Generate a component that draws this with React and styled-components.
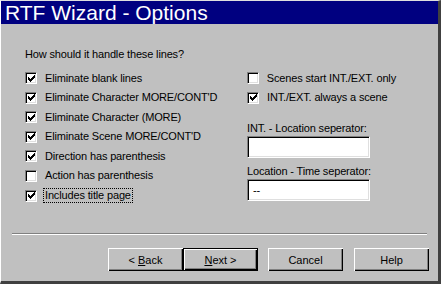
import React from 'react';
import styled, { createGlobalStyle } from 'styled-components';

const Global = createGlobalStyle`
    html, body {
        margin: 0;
        padding: 0;
        background: #c0c0c0;
    }
`
const Janela = styled.div`
    width: 441px;
    height: 284px;
    box-sizing: border-box;
    background: #c0c0c0;
    border-top: 1px solid #dfdfdf;
    border-left: 1px solid #ffffff;
    border-right: 3px solid #404040;
    border-bottom: 3px solid #404040;
    display: flex;
    flex-direction: column;
    font-family: "Liberation Sans", Arial, sans-serif;
    font-size: 11px;
    letter-spacing: -0.15px;
    color: #000000;
`
const BarraTitulo = styled.div`
    height: 23px;
    background: #000080;
    color: #ffffff;
    font-size: 21px;
    letter-spacing: 0;
    line-height: 23px;
    padding-left: 4px;
    white-space: nowrap;
`
const Corpo = styled.div`
    display: flex;
    flex-direction: row;
    padding: 24px 0 1px 24px;
    flex: 1;
`
const Coluna = styled.div`
    display: flex;
    flex-direction: column;
    width: ${props => props.largura}px;
`
const Pergunta = styled.div`
    line-height: 13px;
    margin-bottom: 11px;
`
const Lista = styled.div`
    display: flex;
    flex-direction: column;
    gap: 7.6px;
    margin-top: ${props => props.topo || 0}px;
`
const Linha = styled.label`
    display: flex;
    align-items: center;
    height: 12px;
    gap: 7px;
    white-space: nowrap;
`
const Caixa = styled.span`
    width: 12px;
    height: 12px;
    box-sizing: border-box;
    background: #ffffff;
    border-top: 1px solid #808080;
    border-left: 1px solid #808080;
    border-right: 1px solid #ffffff;
    border-bottom: 1px solid #ffffff;
    box-shadow: inset 1px 1px 0 #000000, inset -1px -1px 0 #dfdfdf;
    display: flex;
    align-items: center;
    justify-content: center;
`
const Texto = styled.span`
    line-height: 13px;
    padding: 0 1px;
    outline: ${props => props.foco ? '1px dotted #000000' : 'none'};
`
const Rotulo = styled.div`
    line-height: 13px;
    margin-top: ${props => props.topo}px;
    margin-bottom: 1px;
`
const Campo = styled.div`
    width: 123px;
    height: 22px;
    box-sizing: border-box;
    background: #ffffff;
    border-top: 1px solid #808080;
    border-left: 1px solid #808080;
    border-right: 1px solid #ffffff;
    border-bottom: 1px solid #ffffff;
    box-shadow: inset 1px 1px 0 #000000, inset -1px -1px 0 #dfdfdf;
    padding: 4px 0 0 5px;
    line-height: 13px;
`
const Separador = styled.div`
    margin: 0 11px 0 11px;
    height: 0;
    border-top: 1px solid #808080;
    border-bottom: 1px solid #ffffff;
`
const Botoes = styled.div`
    display: flex;
    justify-content: flex-end;
    padding: 13px 9px 10px 0;
`
const Grupo = styled.div`
    display: flex;
    margin-left: ${props => props.espaco || 0}px;
`
const Botao = styled.button`
    width: ${props => props.largura || 75}px;
    height: 23px;
    box-sizing: border-box;
    background: #c0c0c0;
    font-family: "Liberation Sans", Arial, sans-serif;
    font-size: 11px;
    color: #000000;
    padding: 0;
    border: ${props => props.padrao ? '1px solid #000000' : 'none'};
    box-shadow: inset 1px 1px 0 #ffffff, inset -1px -1px 0 #000000, inset -2px -2px 0 #808080;
    u {
        text-decoration: underline;
    }
`

const Visto = () => (
    <svg width="7" height="7" viewBox="0 0 7 7" shapeRendering="crispEdges">
        <path d="M0 2 L0 5 L2 7 L7 2 L7 0 L2 4 Z" fill="#000000" />
    </svg>
)

const Opcao = ({ marcado, foco, children }) => (
    <Linha>
        <Caixa>{marcado && <Visto />}</Caixa>
        <Texto foco={foco}>{children}</Texto>
    </Linha>
)

export default class App extends React.Component {
    render() {
        return (
            <div>
                <Global />
                <Janela>
                    <BarraTitulo>RTF Wizard - Options</BarraTitulo>
                    <Corpo>
                        <Coluna largura={222}>
                            <Pergunta>How should it handle these lines?</Pergunta>
                            <Lista>
                                <Opcao marcado>Eliminate blank lines</Opcao>
                                <Opcao marcado>Eliminate Character MORE/CONT'D</Opcao>
                                <Opcao marcado>Eliminate Character (MORE)</Opcao>
                                <Opcao marcado>Eliminate Scene MORE/CONT'D</Opcao>
                                <Opcao marcado>Direction has parenthesis</Opcao>
                                <Opcao>Action has parenthesis</Opcao>
                                <Opcao marcado foco>Includes title page</Opcao>
                            </Lista>
                        </Coluna>
                        <Coluna largura={150}>
                            <Lista topo={24}>
                                <Opcao>Scenes start INT./EXT. only</Opcao>
                                <Opcao marcado>INT./EXT. always a scene</Opcao>
                            </Lista>
                            <Rotulo topo={18}>INT. - Location seperator:</Rotulo>
                            <Campo></Campo>
                            <Rotulo topo={7}>Location - Time seperator:</Rotulo>
                            <Campo>--</Campo>
                        </Coluna>
                    </Corpo>
                    <Separador />
                    <Botoes>
                        <Grupo>
                            <Botao><span>&lt; <u>B</u>ack</span></Botao>
                            <Botao padrao><span><u>N</u>ext &gt;</span></Botao>
                        </Grupo>
                        <Grupo espaco={10}>
                            <Botao>Cancel</Botao>
                        </Grupo>
                        <Grupo espaco={11}>
                            <Botao>Help</Botao>
                        </Grupo>
                    </Botoes>
                </Janela>
            </div>
        )
    }
}
